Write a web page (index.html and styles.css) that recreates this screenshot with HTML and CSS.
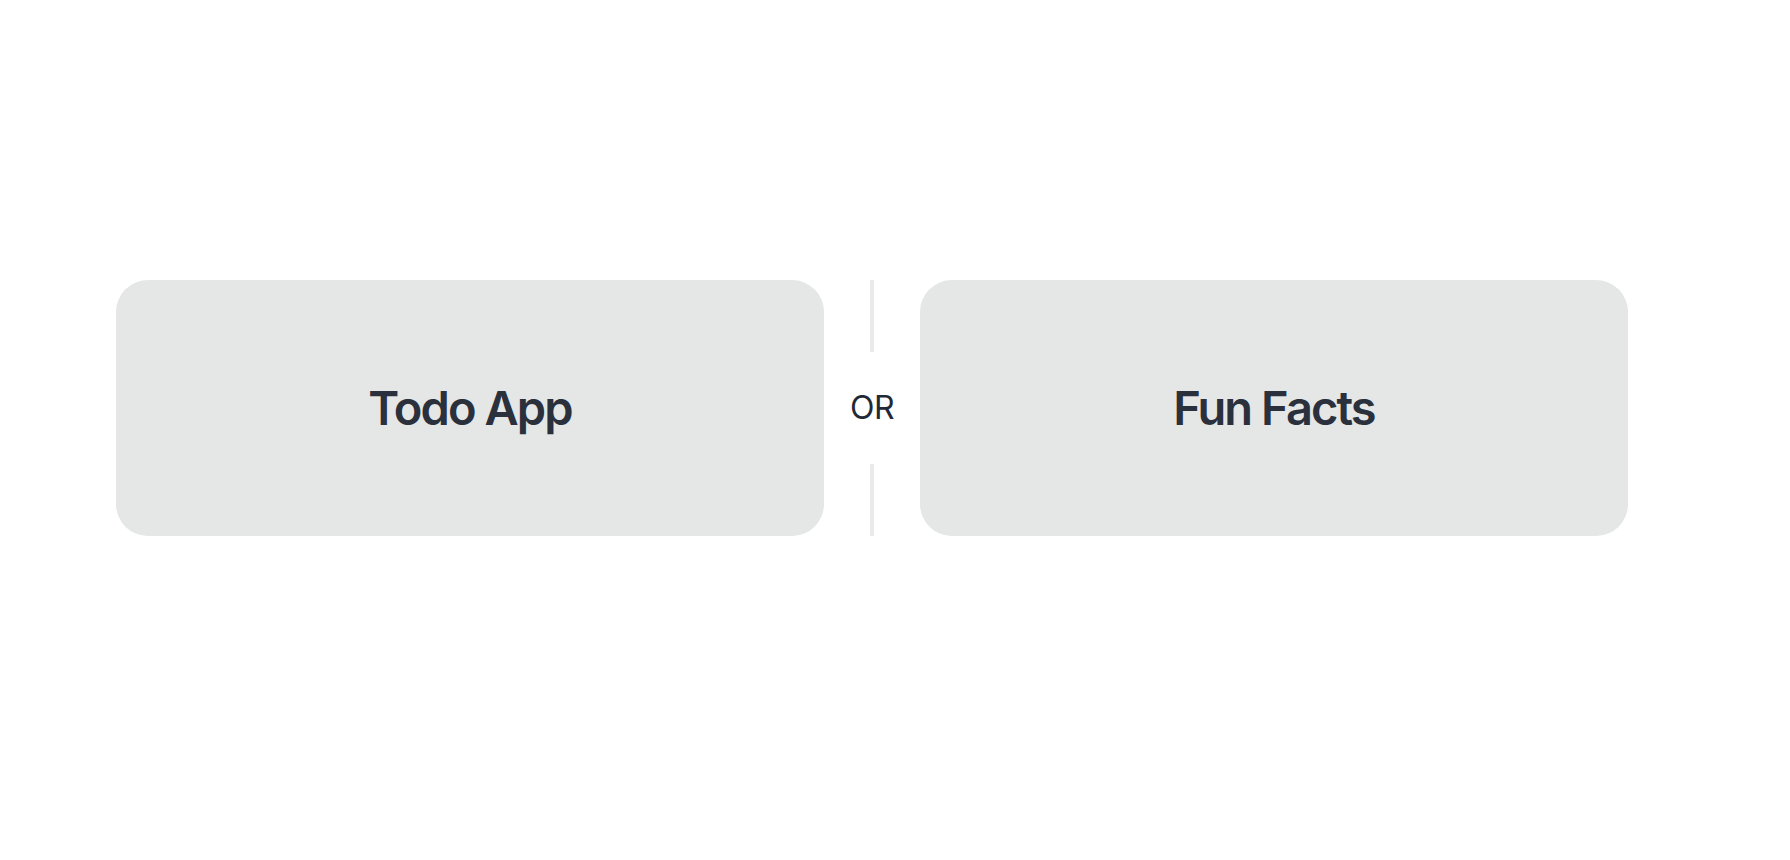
FILE: index.html
```html
<!DOCTYPE html>
<html lang="en">
<head>
<meta charset="utf-8">
<title>Choose</title>
<link rel="stylesheet" href="styles.css">
</head>
<body>
<main class="page">
  <div class="choice">
    <div class="card"><span class="card-title">Todo App</span></div>
    <div class="divider"><span class="divider-text">OR</span></div>
    <div class="card"><span class="card-title">Fun Facts</span></div>
  </div>
</main>
</body>
</html>
```

FILE: styles.css
```css
html, body {
  margin: 0;
  padding: 0;
  background: #ffffff;
  font-family: Inter, "Noto Sans", sans-serif;
  color: #2a303c;
}

.page {
  width: 1790px;
  height: 860px;
  box-sizing: border-box;
  padding: 280px 0 0 116px;
}

.choice {
  display: flex;
  width: 1512px;
  height: 256px;
}

.card {
  flex: 1 1 0;
  display: grid;
  place-items: center;
  background: #e5e6e6;
  border-radius: 32px;
}

.card-title {
  font-size: 47px;
  line-height: 64px;
  font-weight: 600;
  letter-spacing: -1.9px;
  color: #2a303c;
}

.divider {
  width: 32px;
  margin: 0 32px;
  display: flex;
  flex-direction: column;
  align-items: center;
  gap: 32px;
}

.divider::before,
.divider::after {
  content: "";
  flex: 1 1 0;
  width: 4px;
  background: #e9eaeb;
}

.divider-text {
  font-size: 32px;
  line-height: 48px;
  font-weight: 400;
  letter-spacing: -0.6px;
  color: #1f2937;
  white-space: nowrap;
}
```
